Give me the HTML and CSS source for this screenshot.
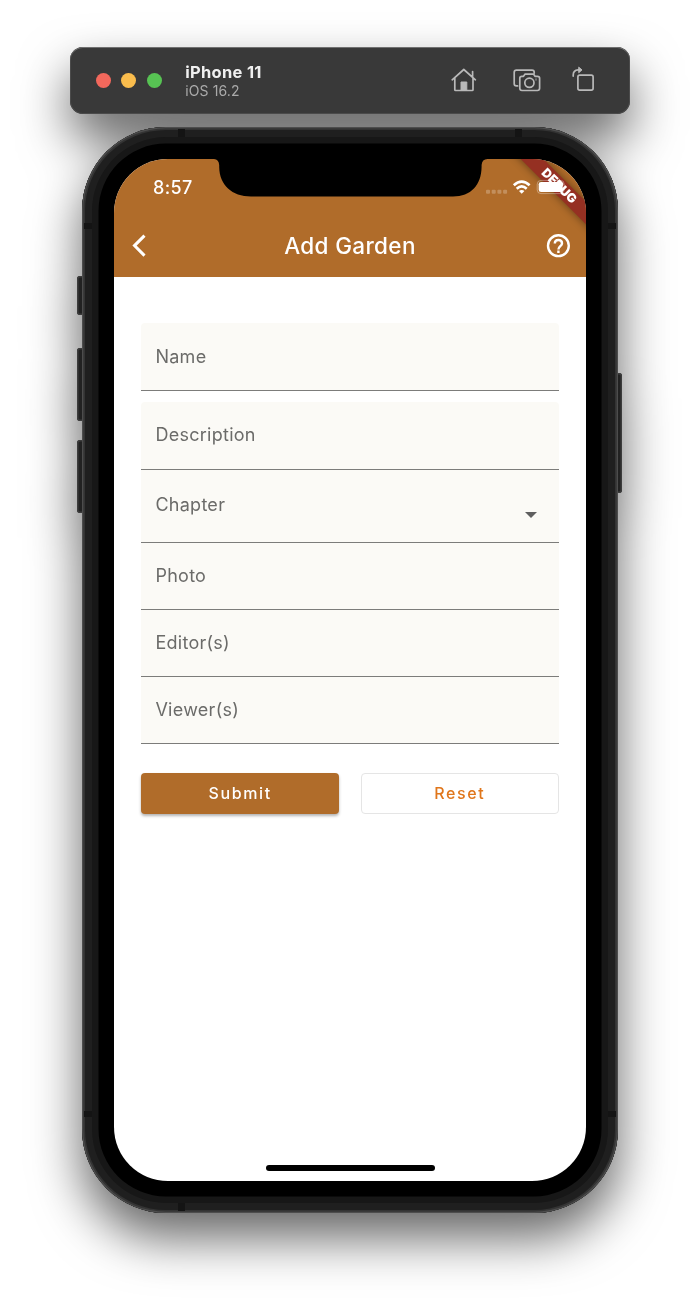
FILE: index.html
```html
<!DOCTYPE html>
<html lang="en">
<head>
<meta charset="utf-8">
<title>Add Garden</title>
<link rel="stylesheet" href="styles.css">
</head>
<body>
<div class="simulator">
  <header class="toolbar">
    <div class="lights">
      <span class="light light-close"></span>
      <span class="light light-min"></span>
      <span class="light light-max"></span>
    </div>
    <div class="device">
      <div class="device-name">iPhone 11</div>
      <div class="device-os">iOS 16.2</div>
    </div>
    <svg class="tool-icons" width="150" height="32" viewBox="446 64.5 150 32" fill="none" stroke="#b9b9b9" stroke-width="1.7" stroke-linejoin="round" stroke-linecap="round">
      <path d="M452.2 79.3 463.8 69 475.4 79.3M454.8 77.5V89.2Q454.8 90 455.6 90H472.2Q473 90 473 89.2V77.5M472.6 76.3V71"/>
      <path d="M461 89.5V81.5H466.8V89.5Z" fill="#b9b9b9" stroke-width="1"/>
      <path d="M517.6 85.4H516.4Q514.2 85.4 514.2 83.2V72Q514.2 69.7 516.4 69.7H532Q534.2 69.7 534.2 71.8V72.6"/>
      <path d="M519.8 77.8Q519.8 75.8 521.8 75.8H523.5L525.1 73.6H533.5L535 75.8H537.4Q539.6 75.8 539.6 77.8V87.8Q539.6 90 537.4 90H522Q519.8 90 519.8 87.8Z"/>
      <circle cx="529.4" cy="82.3" r="4.6"/>
      <circle cx="536" cy="79" r=".2"/>
      <rect x="577.9" y="74.6" width="15.2" height="15" rx="1.8"/>
      <path d="M573.2 75.6V74.8Q573.2 69.6 578.2 69.4H579.5"/>
      <path d="M579 66.9 582 69.4 579 72Z" fill="#b9b9b9" stroke-width="1"/>
    </svg>
  </header>

  <main class="phone">
    <i class="side-button side-mute"></i>
    <i class="side-button side-up"></i>
    <i class="side-button side-down"></i>
    <i class="side-button side-power"></i>
    <div class="case">
      <i class="seam seam-h seam-top seam-left"></i><i class="seam seam-h seam-top seam-right"></i>
      <i class="seam seam-h seam-bottom seam-left"></i>
      <i class="seam seam-v seam-w seam-upper"></i><i class="seam seam-v seam-e seam-upper"></i>
      <i class="seam seam-v seam-w seam-lower"></i><i class="seam seam-v seam-e seam-lower"></i>
      <div class="screen">
        <div class="app-top">
          <div class="banner">DEBUG</div>
          <div class="status">
            <span class="clock">8:57</span>
            <svg class="status-icons" width="86" height="20" viewBox="484 177 86 20">
              <g fill="#fff" fill-opacity=".24">
                <rect x="486" y="189.7" width="4" height="4" rx="1"/><rect x="491.7" y="189.7" width="4" height="4" rx="1"/><rect x="497.4" y="189.7" width="4" height="4" rx="1"/><rect x="503.1" y="189.7" width="4" height="4" rx="1"/>
              </g>
              <g fill="none" stroke="#fff" stroke-width="2.6">
                <path d="M513.8 185.3Q521.7 177.9 529.6 185.3"/>
                <path d="M516.7 188.7Q521.7 184 526.7 188.7"/>
              </g>
              <path d="M519 191Q521.700 188.800 524.4 191L521.700 193.800Z" fill="#fff"/>
              <rect x="537.2" y="180.4" width="27" height="13.2" rx="3.8" fill="none" stroke="#fff" stroke-opacity=".35"/>
              <rect x="538.7" y="181.9" width="24" height="10.2" rx="2.4" fill="#fff"/>
            </svg>
          </div>
          <div class="nav">
            <svg width="16" height="24" viewBox="0 0 16 24" fill="none" stroke="#fff" stroke-width="3"><path d="M13.500 1.600 3.500 11.600 13.500 21.600"/></svg>
            <h1 class="title">Add Garden</h1>
            <svg width="24" height="24" viewBox="0 0 24 24" fill="none" stroke="#fff" stroke-width="2.4"><circle cx="12.4" cy="11.7" r="10.4"/><path d="M8.800 9.500C8.800 7.300 10.400 6 12.400 6S16 7.300 16 9.400C16 12 12.400 12.300 12.400 15.400M12.400 16.600V18.900"/></svg>
          </div>
          <svg class="notch" width="278" height="38" viewBox="0 0 278 38"><path d="M0 0H273.500Q268 .2 267.600 6V8C267.300 26 257 37.500 239 37.500H37C18 37.500 5.400 26 5.200 8V6Q4.800 .2 -.5 0Z"/></svg>
        </div>
        <form class="form">
          <div class="field field-name">Name</div>
          <div class="field field-desc">Description</div>
          <div class="field field-chapter">Chapter
            <svg width="12" height="6" viewBox="0 0 12 6"><path d="M0 0H12L6 6Z" fill="#5f5f5f"/></svg>
          </div>
          <div class="field">Photo</div>
          <div class="field">Editor(s)</div>
          <div class="field">Viewer(s)</div>
          <div class="actions">
            <button type="button" class="btn btn-submit">Submit</button>
            <button type="button" class="btn btn-reset">Reset</button>
          </div>
        </form>
        <div class="home-bar"></div>
      </div>
    </div>
  </main>
</div>
</body>
</html>
```
FILE: styles.css
```css
* { box-sizing: border-box; }
body { margin: 0; background: #fff; font-family: Inter, "Liberation Sans", sans-serif; }

.simulator {
  height: 1307px;
  padding-top: 47px;
  display: flex;
  flex-direction: column;
  align-items: center;
  gap: 13px;
  overflow: hidden;
  filter: drop-shadow(0 25px 25px rgba(0, 0, 0, .6));
}

.toolbar {
  width: 560px;
  height: 67px;
  flex: none;
  padding: 0 34px 0 26px;
  display: flex;
  align-items: center;
  border-radius: 13px;
  background: #393939;
  box-shadow: inset 0 1px 0 #707070, inset 0 0 0 1px #4b4b4b;
}
.lights { display: flex; gap: 10.3px; }
.light { width: 15px; height: 15px; border-radius: 50%; }
.light-close { background: #f3685c; }
.light-min { background: #fabd4d; }
.light-max { background: #57c353; }
.device { margin-left: 23.7px; flex: 1; padding-top: 2px; }
.device-name { font-size: 16.5px; line-height: 19px; font-weight: 700; letter-spacing: .3px; color: #f0f0f0; }
.device-os { font-size: 14px; line-height: 18px; letter-spacing: .1px; color: #aaa; }

.phone { position: relative; width: 536px; height: 1086px; flex: none; }
.side-button { position: absolute; width: 9px; border-radius: 3px; background: #222; box-shadow: inset 0 0 0 1.5px #3d3d3d; }
.side-mute { left: -5px; top: 149px; height: 39px; }
.side-up { left: -5px; top: 221px; height: 73px; }
.side-down { left: -5px; top: 313px; height: 73px; }
.side-power { right: -4px; top: 246px; height: 120px; }

.case {
  position: relative;
  height: 100%;
  padding: 32px 32px 32.5px;
  border-radius: 84px;
  background: #000;
  box-shadow: inset 0 0 0 1.3px #4d4d4d, inset 0 0 0 3px #333, inset 0 0 0 10px #1f1f1f, inset 0 0 0 16.5px #171717;
}
.seam { position: absolute; background: #141414; }
.seam-h { width: 7px; height: 8px; }
.seam-v { width: 8px; height: 6px; }
.seam-top { top: 2px; }
.seam-bottom { bottom: 2px; }
.seam-left { left: 96px; }
.seam-right { right: 96px; }
.seam-w { left: 2px; }
.seam-e { right: 2px; }
.seam-upper { top: 96px; }
.seam-lower { bottom: 96px; }

.screen {
  height: 100%;
  display: flex;
  flex-direction: column;
  border-radius: 54px;
  overflow: hidden;
  background: #fff;
}
.app-top { position: relative; height: 118px; flex: none; background: #b06c2a; color: #fff; overflow: hidden; }
.status { position: relative; height: 56px; padding: 0 16px 0 39px; display: flex; align-items: center; justify-content: space-between; }
.clock { font-size: 18px; font-weight: 500; letter-spacing: .4px; }
.nav { height: 61px; padding: 0 16px 0 17px; display: flex; align-items: center; justify-content: space-between; }
.title { margin: 0 0 0 7px; font-size: 22.5px; font-weight: 500; letter-spacing: .35px; }
.notch { position: absolute; left: 99.5px; top: 0; }
.banner {
  position: absolute;
  left: 384.5px;
  top: 19px;
  width: 120px;
  height: 16px;
  line-height: 16px;
  text-align: center;
  background: #953022;
  box-shadow: 0 0 9px rgba(0, 0, 0, .45);
  font-size: 12.5px;
  font-weight: 900;
  transform: rotate(45deg);
}

.form { flex: 1; padding: 46px 27.5px 0 27.4px; display: flex; flex-direction: column; }
.field {
  height: 67.2px;
  padding: 0 21.5px 1px 14px;
  display: flex;
  align-items: center;
  justify-content: space-between;
  background: #fbfaf6;
  border-bottom: 1px solid #7c7c7a;
  color: #6b6b69;
  font-size: 18px;
  letter-spacing: .27px;
}
.field-name { margin-bottom: 11px; border-radius: 4px 4px 0 0; height: 68px; }
.field-desc { border-radius: 4px 4px 0 0; height: 67.5px; }
.field-chapter { height: 73px; padding-bottom: 2px; }
.field-chapter svg { margin-top: 20px; }

.actions { margin-top: 29px; display: grid; grid-template-columns: 1fr 1fr; gap: 22px; }
.btn { height: 41px; padding: 0 0 1px; border-radius: 4px; font: 500 16px Inter, "Liberation Sans", sans-serif; letter-spacing: 1.6px; }
.btn-submit { border: 0; background: #b06c2a; color: #fff; box-shadow: 0 2px 3px rgba(0, 0, 0, .3); }
.btn-reset { border: 1.5px solid #e5e5e5; background: #fff; color: #e0761b; }
.home-bar { width: 169px; height: 6px; margin: 0 auto 9.5px; border-radius: 3px; background: #000; }
```
